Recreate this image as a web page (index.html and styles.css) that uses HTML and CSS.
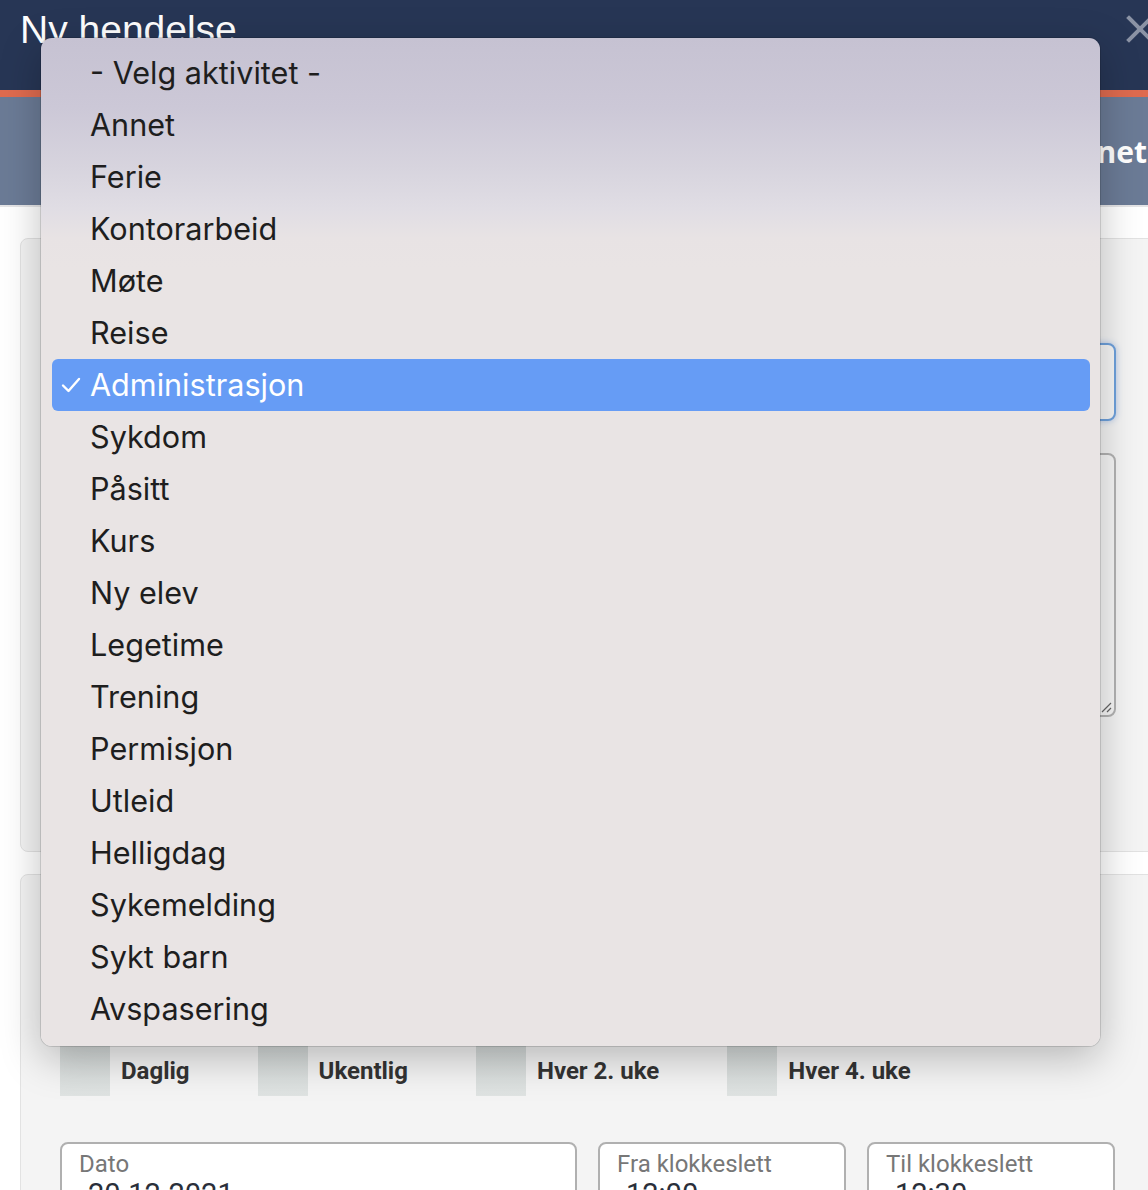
FILE: index.html
```html
<!DOCTYPE html>
<html lang="no">
<head>
<meta charset="utf-8">
<title>Ny hendelse</title>
<link rel="stylesheet" href="styles.css">
</head>
<body>
  <div class="modal">
    <header class="modal-head">
      <h1 class="modal-title">Ny hendelse</h1>
      <button class="close" type="button" aria-label="Lukk">
        <svg viewBox="0 0 28 28" width="28" height="28"><path d="M3 3 L25 25 M25 3 L3 25" stroke="currentColor" stroke-width="4" stroke-linecap="square" fill="none"/></svg>
      </button>
    </header>
    <nav class="tabs">
      <span class="tab">Annet</span>
    </nav>
    <main class="modal-body">
      <section class="card card-main">
        <div class="field select-field"></div>
        <div class="field textarea-field">
          <svg class="grip" viewBox="0 0 12 12" width="12" height="12"><path d="M11 2 L2 11 M11 7 L7 11" stroke="#666" stroke-width="1.2" fill="none"/></svg>
        </div>
      </section>
      <section class="card card-repeat">
        <div class="repeat-row">
          <label class="repeat-opt"><span class="box"></span><span class="opt-label">Daglig</span></label>
          <label class="repeat-opt"><span class="box"></span><span class="opt-label">Ukentlig</span></label>
          <label class="repeat-opt"><span class="box"></span><span class="opt-label">Hver 2. uke</span></label>
          <label class="repeat-opt"><span class="box"></span><span class="opt-label">Hver 4. uke</span></label>
        </div>
        <div class="field-row">
          <div class="field input-field f-date"><span class="f-label">Dato</span><span class="f-value">20.12.2021</span></div>
          <div class="field input-field f-time"><span class="f-label">Fra klokkeslett</span><span class="f-value">12:00</span></div>
          <div class="field input-field f-time"><span class="f-label">Til klokkeslett</span><span class="f-value">12:30</span></div>
        </div>
      </section>
    </main>
  </div>

  <ul class="menu" role="listbox">
    <li class="menu-item">- Velg aktivitet -</li>
    <li class="menu-item">Annet</li>
    <li class="menu-item">Ferie</li>
    <li class="menu-item">Kontorarbeid</li>
    <li class="menu-item">Møte</li>
    <li class="menu-item">Reise</li>
    <li class="menu-item selected"><svg class="check" viewBox="0 0 20 16" width="20" height="16"><path d="M2 8.5 L7.5 14 L18 2" stroke="#fff" stroke-width="2.4" fill="none" stroke-linecap="round" stroke-linejoin="round"/></svg>Administrasjon</li>
    <li class="menu-item">Sykdom</li>
    <li class="menu-item">Påsitt</li>
    <li class="menu-item">Kurs</li>
    <li class="menu-item">Ny elev</li>
    <li class="menu-item">Legetime</li>
    <li class="menu-item">Trening</li>
    <li class="menu-item">Permisjon</li>
    <li class="menu-item">Utleid</li>
    <li class="menu-item">Helligdag</li>
    <li class="menu-item">Sykemelding</li>
    <li class="menu-item">Sykt barn</li>
    <li class="menu-item">Avspasering</li>
  </ul>
</body>
</html>
```

FILE: styles.css
```css
html, body {
  margin: 0;
  padding: 0;
}

body {
  width: 1148px;
  height: 1190px;
  overflow: hidden;
  position: relative;
  background: #ffffff;
  font-family: Roboto, "Noto Sans", sans-serif;
}

.modal {
  width: 1180px;
}

/* header bar */
.modal-head {
  height: 90px;
  background: #273655;
  display: flex;
  align-items: flex-start;
  justify-content: space-between;
}

.modal-title {
  margin: 0;
  padding: 6px 0 0 20px;
  font-family: "Liberation Sans", Arial, sans-serif;
  font-weight: 400;
  font-size: 39px;
  line-height: 48px;
  color: #ffffff;
}

.close {
  margin: 15px 26px 0 0;
  padding: 0;
  border: 0;
  background: none;
  color: #8b93a5;
  width: 28px;
  height: 28px;
}

.close svg {
  display: block;
}

/* tab strip */
.tabs {
  border-top: 7px solid #df6b4f;
  height: 108px;
  background: #6b7b96;
  border-bottom: 2px solid #e4e4e6;
  display: flex;
  justify-content: flex-end;
  align-items: center;
  padding-right: 33px;
}

.tab {
  font-family: "Open Sans", sans-serif;
  font-weight: 700;
  font-size: 30px;
  color: #ffffff;
  margin-top: 0;
}

/* content */
.modal-body {
  padding: 31px 0 0 20px;
  display: flex;
  flex-direction: column;
  gap: 22px;
}

.card {
  background: #f4f4f4;
  border: 1px solid #e2e2e2;
  border-radius: 8px;
  padding: 0 40px 0 39px;
  box-sizing: border-box;
  width: 1180px;
}

.card-main {
  height: 614px;
  padding-top: 104px;
  display: flex;
  flex-direction: column;
  gap: 32px;
}

.field {
  box-sizing: border-box;
  width: 1056px;
  border-radius: 8px;
  background: #ffffff;
}

.select-field {
  height: 78px;
  border: 2px solid #6ea1dc;
  box-shadow: 0 0 6px rgba(90, 140, 220, 0.45);
  background: #f7f7f7;
}

.textarea-field {
  height: 264px;
  border: 2px solid #b3b3b3;
  background: #f7f7f7;
  position: relative;
}

.grip {
  position: absolute;
  right: 2px;
  bottom: 2px;
}

.card-repeat {
  height: 400px;
  padding-top: 171px;
}

.repeat-row {
  display: flex;
  gap: 68px;
  align-items: center;
}

.repeat-opt {
  display: flex;
  align-items: center;
  gap: 11px;
}

.box {
  width: 50px;
  height: 50px;
  background: linear-gradient(#d4d9d8, #dfe3e2);
}

.opt-label {
  font-family: Roboto, sans-serif;
  font-weight: 700;
  font-size: 24px;
  color: #333333;
}

.field-row {
  margin-top: 46px;
  display: flex;
  gap: 21px;
}

.input-field {
  height: 90px;
  border: 2px solid #b0b0b0;
  padding: 6px 0 0 17px;
  display: flex;
  flex-direction: column;
}

.f-date { width: 517px; }
.f-time { width: 248px; }

.f-label {
  font-family: Roboto, sans-serif;
  font-size: 24px;
  line-height: 28px;
  color: #777777;
}

.f-value {
  font-family: Roboto, sans-serif;
  font-size: 29px;
  line-height: 32px;
  color: #2a2f3a;
  padding-left: 9px;
}

/* activity dropdown */
.menu {
  position: absolute;
  left: 41px;
  top: 38px;
  width: 1059px;
  height: 1008px;
  box-sizing: border-box;
  margin: 0;
  padding: 9px 10px 11px 11px;
  list-style: none;
  border-radius: 11px;
  background: linear-gradient(to bottom, #c6c2d2 0px, #ccc8d7 70px, #d7d4de 130px, #e0dde4 170px, #e8e3e4 200px, #e9e4e4 230px, #e9e4e4 100%);
  box-shadow: 0 0 0 1px rgba(0, 0, 0, 0.13), 0 12px 40px rgba(0, 0, 0, 0.25);
}

.menu-item {
  height: 52px;
  line-height: 52px;
  padding-left: 38px;
  position: relative;
  font-family: Inter, "Noto Sans", sans-serif;
  font-size: 30.6px;
  color: #1e1e1e;
  border-radius: 6px;
}

.menu-item.selected {
  background: #669cf5;
  color: #ffffff;
}

.check {
  position: absolute;
  left: 9px;
  top: 18px;
}
```
